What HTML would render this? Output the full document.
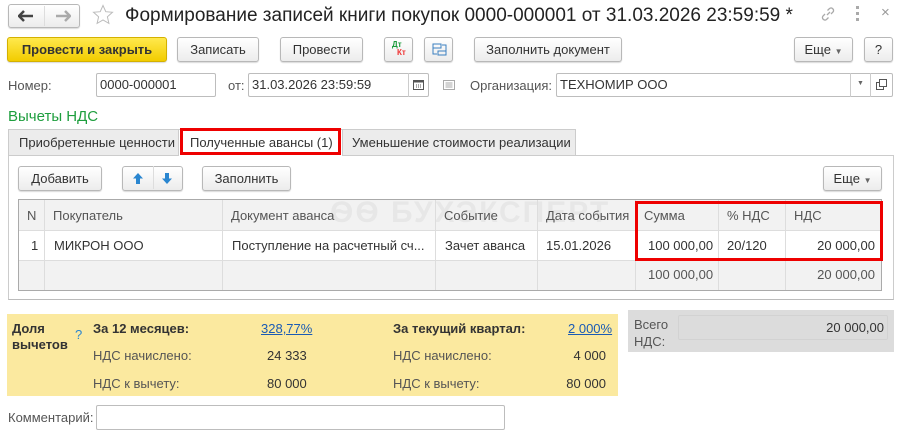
<!DOCTYPE html>
<html><head><meta charset="utf-8"><style>
*{box-sizing:border-box;margin:0;padding:0}
body{width:904px;height:436px;background:#fff;font-family:"Liberation Sans",Arial,sans-serif;font-size:13px;color:#333;position:relative;overflow:hidden}
.a{position:absolute;white-space:nowrap}
.btn{position:absolute;border:1px solid #b8b8b8;border-radius:3px;background:linear-gradient(#fff,#ececec);box-shadow:0 1px 1px rgba(0,0,0,.15);text-align:center;line-height:23px;color:#333;white-space:nowrap}
.inp{position:absolute;border:1px solid #bdbdbd;border-radius:2px;background:#fff;line-height:22px;padding-left:3px;color:#333;white-space:nowrap}
.lbl{position:absolute;color:#555;white-space:nowrap}
.cell{position:absolute;border-right:1px solid #ddd;padding-left:8px;white-space:nowrap}
</style></head><body>
<!-- nav -->
<div class="btn" style="left:8px;top:4px;width:72px;height:24px"></div>
<div class="a" style="left:44px;top:6px;width:1px;height:20px;background:#ddd"></div>
<svg class="a" style="left:18px;top:10px" width="16" height="12"><path d="M1 6h14M6 1L1 6l5 5" fill="none" stroke="#444" stroke-width="2.5"/></svg>
<svg class="a" style="left:55px;top:10px" width="16" height="12"><path d="M1 6h14M10 1l5 5-5 5" fill="none" stroke="#aaa" stroke-width="2.5"/></svg>
<svg class="a" style="left:92px;top:4px" width="22" height="22"><path d="M11 1.5l2.8 6.2 6.7.6-5.1 4.5 1.5 6.6L11 16l-5.9 3.4 1.5-6.6L1.5 8.3l6.7-.6z" fill="none" stroke="#bbb"/></svg>
<div class="a" style="left:125px;top:5px;font-size:19px;color:#222">Формирование записей книги покупок 0000-000001 от 31.03.2026 23:59:59 *</div>
<svg class="a" style="left:820px;top:6px" width="16" height="16"><path d="M7 9l3-3M5 8l-2 2a2.5 2.5 0 003.5 3.5l2-2M11 8l2-2A2.5 2.5 0 009.5 2.5l-2 2" fill="none" stroke="#aaa" stroke-width="1.3"/></svg>
<div class="a" style="left:856px;top:6px;width:3px;height:3px;background:#aaa"></div>
<div class="a" style="left:856px;top:12px;width:3px;height:3px;background:#aaa"></div>
<div class="a" style="left:856px;top:18px;width:3px;height:3px;background:#aaa"></div>
<div class="a" style="left:881px;top:4px;font-size:15px;color:#999">×</div>
<!-- toolbar -->
<div class="btn" style="left:7px;top:37px;width:160px;height:25px;background:linear-gradient(#ffe94d,#f2cc00);border-color:#d4b100;font-weight:bold;color:#333">Провести и закрыть</div>
<div class="btn" style="left:177px;top:37px;width:82px;height:25px">Записать</div>
<div class="btn" style="left:280px;top:37px;width:83px;height:25px">Провести</div>
<div class="btn" style="left:384px;top:37px;width:29px;height:25px"><span class="a" style="left:7px;top:-5px;font-size:8px;color:#1a9a3a;font-weight:bold">Дт</span><span class="a" style="left:12px;top:3px;font-size:8px;color:#e33;font-weight:bold">Кт</span></div>
<div class="btn" style="left:424px;top:37px;width:29px;height:25px"><svg class="a" style="left:7px;top:5px" width="15" height="14"><rect x="1" y="1" width="8" height="4" fill="none" stroke="#3a7fc0"/><rect x="6" y="8" width="8" height="4" fill="none" stroke="#3a7fc0"/><path d="M1 5v6h4M14 8V2h-4" fill="none" stroke="#3a7fc0"/></svg></div>
<div class="btn" style="left:474px;top:37px;width:148px;height:25px">Заполнить документ</div>
<div class="btn" style="left:794px;top:37px;width:59px;height:25px">Еще <span style="font-size:8px;color:#666">▼</span></div>
<div class="btn" style="left:864px;top:37px;width:29px;height:25px">?</div>
<!-- row -->
<div class="lbl" style="left:8px;top:78px">Номер:</div>
<div class="inp" style="left:96px;top:73px;width:120px;height:24px">0000-000001</div>
<div class="lbl" style="left:228px;top:78px">от:</div>
<div class="inp" style="left:248px;top:73px;width:181px;height:24px">31.03.2026 23:59:59</div>
<div class="a" style="left:408px;top:73px;width:1px;height:24px;background:#ccc"></div>
<svg class="a" style="left:413px;top:79px" width="11" height="11"><rect x="0.5" y="1.5" width="10" height="9" fill="none" stroke="#555"/><rect x="0.5" y="1.5" width="10" height="2" fill="#555"/><path d="M3 6h1M5 6h1M7 6h1M3 8h1M5 8h1M7 8h1" stroke="#555"/></svg>
<svg class="a" style="left:443px;top:80px" width="12" height="10"><rect x="0.5" y="0.5" width="11" height="9" fill="none" stroke="#aaa"/><path d="M2.5 3h7M2.5 5h7M2.5 7h7" stroke="#aaa"/></svg>
<div class="lbl" style="left:470px;top:78px">Организация:</div>
<div class="inp" style="left:556px;top:73px;width:337px;height:24px">ТЕХНОМИР ООО</div>
<div class="a" style="left:850px;top:73px;width:1px;height:24px;background:#ccc"></div>
<div class="a" style="left:870px;top:73px;width:1px;height:24px;background:#ccc"></div>
<div class="a" style="left:857px;top:80px;font-size:7px;color:#666">▼</div>
<svg class="a" style="left:876px;top:79px" width="11" height="11"><rect x="3.5" y="0.5" width="7" height="7" fill="none" stroke="#555"/><path d="M3.5 3.5H0.5v7h7V7.5" fill="none" stroke="#555"/></svg>
<div class="a" style="left:8px;top:108px;font-size:15px;color:#1e9e3e">Вычеты НДС</div>
<!-- tabs -->
<div class="a" style="left:8px;top:129px;width:171px;height:26px;background:#ececec;border:1px solid #ccc;border-bottom:none;line-height:25px;padding-left:10px">Приобретенные ценности</div>
<div class="a" style="left:179px;top:129px;width:163px;height:27px;background:#fff;border-top:1px solid #ccc;line-height:25px;padding-left:11px;z-index:2">Полученные авансы (1)</div>
<div class="a" style="left:180px;top:128px;width:161px;height:27px;border:3px solid #e00;z-index:3"></div>
<div class="a" style="left:342px;top:129px;width:234px;height:26px;background:#ececec;border:1px solid #ccc;border-bottom:none;line-height:25px;padding-left:9px">Уменьшение стоимости реализации</div>
<div class="a" style="left:8px;top:155px;width:886px;height:145px;border:1px solid #ccc;border-bottom:1px solid #bbb"></div>
<div class="btn" style="left:18px;top:166px;width:84px;height:25px">Добавить</div>
<div class="btn" style="left:122px;top:166px;width:61px;height:25px"><svg class="a" style="left:9px;top:5px" width="12" height="13"><path d="M6 1L1 6.5h3V12h4V6.5h3z" fill="#2a86d0"/></svg><span class="a" style="left:30px;top:-1px;width:1px;height:23px;background:#ddd"></span><svg class="a" style="left:38px;top:5px" width="12" height="13"><path d="M6 12L1 6.5h3V1h4v5.5h3z" fill="#2a86d0"/></svg></div>
<div class="btn" style="left:202px;top:166px;width:89px;height:25px">Заполнить</div>
<div class="btn" style="left:823px;top:166px;width:59px;height:25px">Еще <span style="font-size:8px;color:#666">▼</span></div>
<!-- table -->
<div class="a" style="left:18px;top:199px;width:864px;height:92px;border:1px solid #aaa;background:#fff"></div>
<div class="a" style="left:19px;top:200px;width:862px;height:31px;background:#f2f2f2;border-bottom:1px solid #ddd"></div>
<div class="a" style="left:19px;top:260px;width:862px;height:30px;background:#f2f2f2;border-top:1px solid #ddd"></div>
<div class="a" style="left:330px;top:196px;font-size:30px;font-weight:bold;color:rgba(0,0,0,.045);letter-spacing:2px">ѲѲ БУХЭКСПЕРТ</div>
<div style="position:absolute;left:19px;top:200px;line-height:31px;color:#555">
<div class="cell" style="left:0;width:26px;height:90px"><span>N</span></div>
<div class="cell" style="left:26px;width:178px;height:90px">Покупатель</div>
<div class="cell" style="left:204px;width:213px;height:90px">Документ аванса</div>
<div class="cell" style="left:417px;width:102px;height:90px">Событие</div>
<div class="cell" style="left:519px;width:98px;height:90px">Дата события</div>
<div class="cell" style="left:617px;width:83px;height:90px">Сумма</div>
<div class="cell" style="left:700px;width:67px;height:90px">% НДС</div>
<div class="cell" style="left:767px;width:95px;height:90px;border:none">НДС</div>
</div>
<div style="position:absolute;left:19px;top:231px;line-height:29px;color:#333">
<span class="a" style="left:12px">1</span>
<span class="a" style="left:35px">МИКРОН ООО</span>
<span class="a" style="left:213px">Поступление на расчетный сч...</span>
<span class="a" style="left:426px">Зачет аванса</span>
<span class="a" style="left:527px">15.01.2026</span>
<span class="a" style="left:629px">100 000,00</span>
<span class="a" style="left:708px">20/120</span>
<span class="a" style="left:776px;width:80px;text-align:right">20 000,00</span>
</div>
<div style="position:absolute;left:19px;top:260px;line-height:30px;color:#555">
<span class="a" style="left:629px">100 000,00</span>
<span class="a" style="left:776px;width:80px;text-align:right">20 000,00</span>
</div>
<div class="a" style="left:635px;top:201px;width:248px;height:60px;border:3px solid #e00"></div>
<!-- yellow -->
<div class="a" style="left:7px;top:314px;width:611px;height:82px;background:#fbe99f"></div>
<div class="a" style="left:12px;top:321px;font-weight:bold;line-height:16px">Доля<br>вычетов</div>
<div class="a" style="left:75px;top:327px;color:#2a86d0">?</div>
<div class="a" style="left:93px;top:321px;font-weight:bold">За 12 месяцев:</div>
<div class="a" style="left:261px;top:321px;color:#1a5bb5;text-decoration:underline">328,77%</div>
<div class="lbl" style="left:93px;top:348px">НДС начислено:</div>
<div class="a" style="left:267px;top:348px">24 333</div>
<div class="lbl" style="left:93px;top:376px">НДС к вычету:</div>
<div class="a" style="left:267px;top:376px">80 000</div>
<div class="a" style="left:393px;top:321px;font-weight:bold">За текущий квартал:</div>
<div class="a" style="left:568px;top:321px;color:#1a5bb5;text-decoration:underline">2 000%</div>
<div class="lbl" style="left:393px;top:348px">НДС начислено:</div>
<div class="a" style="left:560px;top:348px;width:46px;text-align:right">4 000</div>
<div class="lbl" style="left:393px;top:376px">НДС к вычету:</div>
<div class="a" style="left:560px;top:376px;width:46px;text-align:right">80 000</div>
<!-- gray -->
<div class="a" style="left:628px;top:310px;width:266px;height:42px;background:#dcdcdc"></div>
<div class="a" style="left:634px;top:316px;color:#555;line-height:17px">Всего<br>НДС:</div>
<div class="a" style="left:678px;top:315px;width:210px;height:25px;border:1px solid #d2d2d2;border-radius:2px;line-height:23px;text-align:right;padding-right:3px;color:#333">20 000,00</div>
<!-- comment -->
<div class="lbl" style="left:8px;top:410px">Комментарий:</div>
<div class="inp" style="left:96px;top:405px;width:409px;height:25px"></div>
</body></html>
